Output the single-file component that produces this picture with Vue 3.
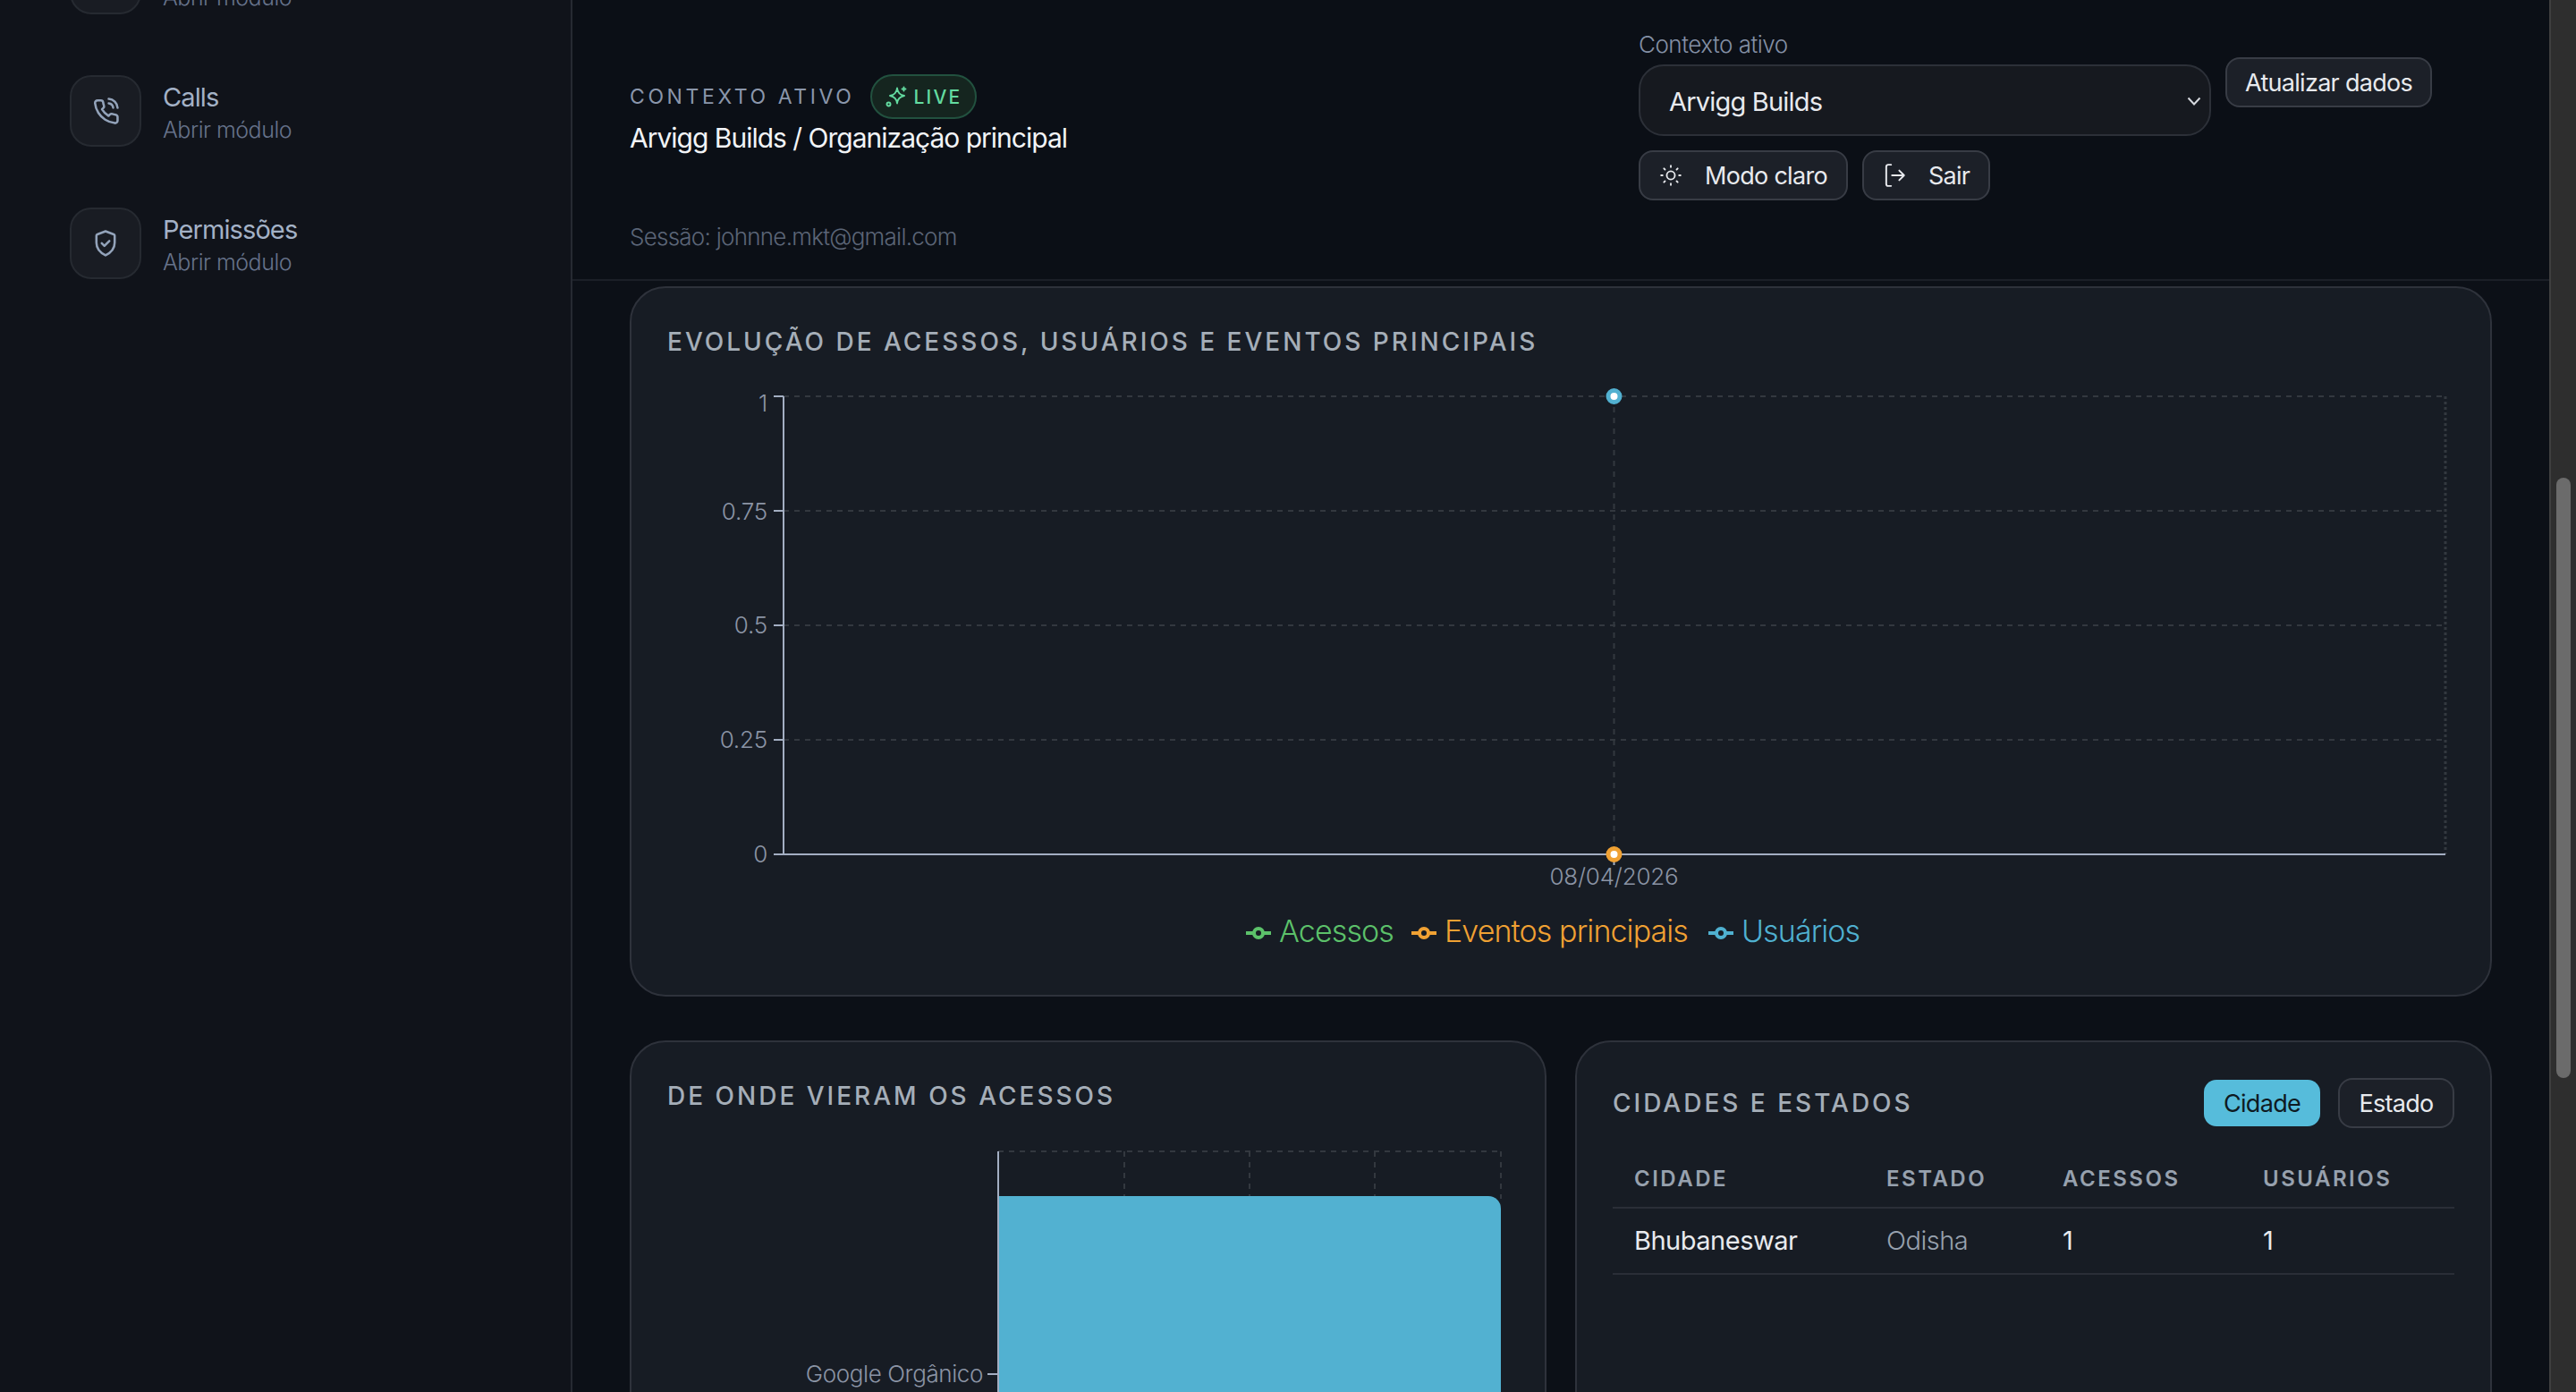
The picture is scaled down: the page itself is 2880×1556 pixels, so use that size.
<template>
  <div class="app">
    <aside class="sidebar">
      <div v-for="item in navItems" :key="item.icon || 'top'" class="nav-item">
        <div class="nav-icon">
          <svg v-if="item.icon === 'phone'" width="34" height="34" viewBox="0 0 24 24" fill="none" stroke="currentColor" stroke-width="1.8" stroke-linecap="round" stroke-linejoin="round">
            <path d="M14.5 2.5a7.5 7.5 0 0 1 7 7" />
            <path d="M14.5 6a4 4 0 0 1 3.5 3.5" />
            <path d="M21.5 17v2.6a2 2 0 0 1-2.2 2 17.6 17.6 0 0 1-7.6-2.7 17.3 17.3 0 0 1-5.3-5.3 17.6 17.6 0 0 1-2.7-7.7A2 2 0 0 1 5.7 3.7h2.6a1.8 1.8 0 0 1 1.8 1.5c.1.9.3 1.7.6 2.5a1.8 1.8 0 0 1-.4 1.9L9.200 10.700a14 14 0 0 0 5.200 5.200l1.100-1.100a1.800 1.800 0 0 1 1.900-.4c.8.3 1.600.5 2.500.6a1.800 1.800 0 0 1 1.600 2z" />
          </svg>
          <svg v-else-if="item.icon === 'shield'" width="34" height="34" viewBox="0 0 24 24" fill="none" stroke="currentColor" stroke-width="1.8" stroke-linecap="round" stroke-linejoin="round">
            <path d="M12 2.500l6.500 2.400a1 1 0 0 1 .7 1v5.600c0 4.700-3.200 8-7.200 10-4-2-7.200-5.300-7.200-10V5.900a1 1 0 0 1 .7-1z" />
            <path d="M9 11.900l2.100 2.100 3.900-3.900" />
          </svg>
        </div>
        <div class="nav-text">
          <div class="nav-label">{{ item.label || '\u00a0' }}</div>
          <div class="nav-sub">Abrir módulo</div>
        </div>
      </div>
    </aside>

    <main class="main">
      <header class="topbar">
        <div class="context-info">
          <div class="eyebrow-row">
            <span class="eyebrow">CONTEXTO ATIVO</span>
            <span class="live-pill">
              <svg width="24" height="24" viewBox="0 0 24 24" fill="none" stroke="currentColor" stroke-width="1.9" stroke-linecap="round" stroke-linejoin="round">
                <path d="M13 2.500c.5 5 3 7.500 8 8.500-5 1-7.500 3.500-8 8.500-.5-5-3-7.500-8-8.500 5-1 7.500-3.500 8-8.500z" />
                <path d="M20.500 1.500v4M18.500 3.500h4" />
                <circle cx="3.500" cy="20.500" r="2" />
              </svg>
              LIVE
            </span>
          </div>
          <div class="context-title">Arvigg Builds / Organização principal</div>
          <div class="session">Sessão: johnne.mkt@gmail.com</div>
        </div>

        <div class="context-controls">
          <div class="controls-row">
            <div class="field">
              <label class="field-label">Contexto ativo</label>
              <div class="select-box">
                <span>Arvigg Builds</span>
                <svg class="chevron" width="16" height="10" viewBox="0 0 16 10" fill="none" stroke="currentColor" stroke-width="2">
                  <path d="M1.500 1.500L8 8.500l6.500-7" />
                </svg>
              </div>
            </div>
            <button class="btn refresh">Atualizar dados</button>
          </div>
          <div class="controls-row second">
            <button class="btn with-icon">
              <svg width="26" height="26" viewBox="0 0 24 24" fill="none" stroke="currentColor" stroke-width="1.7" stroke-linecap="round">
                <circle cx="12" cy="12" r="4.200" />
                <path d="M12 2v1.500M12 20.500V22M2 12h1.500M20.500 12H22M4.900 4.900L6 6M18 18l1.100 1.100M4.900 19.100L6 18M18 6l1.100-1.100" />
              </svg>
              Modo claro
            </button>
            <button class="btn with-icon">
              <svg width="26" height="28" viewBox="0 0 24 26" fill="none" stroke="currentColor" stroke-width="1.800" stroke-linecap="round" stroke-linejoin="round">
                <path d="M8.500 2H5.500a2 2 0 0 0-2 2v18a2 2 0 0 0 2 2h3" />
                <path d="M9.500 13H22M17 8l5 5-5 5" />
              </svg>
              Sair
            </button>
          </div>
        </div>
      </header>

      <div class="content">
        <section class="card evolution">
          <h2 class="card-title">EVOLUÇÃO DE ACESSOS, USUÁRIOS E EVENTOS PRINCIPAIS</h2>
          <svg class="line-chart" width="1998" height="660" viewBox="746 430 1998 660">
            <g stroke="#33383f" stroke-width="2" stroke-dasharray="6 6">
              <line v-for="y in gridY" :key="y" x1="876" :y1="y" x2="2734" :y2="y" />
              <line x1="1804.500" y1="443" x2="1804.500" y2="955" />
              <line x1="2734" y1="443" x2="2734" y2="955" stroke-width="3" stroke-dasharray="3 3" />
            </g>
            <g stroke="#a3aec2">
              <line x1="876" y1="443" x2="876" y2="955" stroke-width="2" />
              <line x1="865" y1="955" x2="2734" y2="955" stroke-width="2" />
              <line x1="865" y1="443" x2="876" y2="443" stroke-width="2" />
              <line v-for="y in gridY.slice(1)" :key="y" x1="865" :y1="y" x2="876" :y2="y" stroke-width="2" />
              <line x1="1804.500" y1="955" x2="1804.500" y2="967" stroke-width="2" />
            </g>
            <g class="axis-text" text-anchor="end">
              <text x="858" y="460">1</text>
              <text x="858" y="581">0.75</text>
              <text x="858" y="708">0.5</text>
              <text x="858" y="836">0.25</text>
              <text x="858" y="964">0</text>
            </g>
            <text class="axis-text" x="1804.500" y="989" text-anchor="middle">08/04/2026</text>
            <circle cx="1804.500" cy="443" r="6.500" fill="#fff" stroke="#52b1d1" stroke-width="5" />
            <circle cx="1804.500" cy="955" r="6.500" fill="#fff" stroke="#f0a133" stroke-width="5" />
            <g v-for="entry in legend" :key="entry.label" :style="{ color: entry.color }">
              <line :x1="entry.x" y1="1043" :x2="entry.x + 28" y2="1043" stroke="currentColor" stroke-width="4" />
              <circle :cx="entry.x + 14" cy="1043" r="5" fill="#171c24" stroke="currentColor" stroke-width="4" />
              <text class="legend-text" :x="entry.x + 37" y="1053" fill="currentColor">{{ entry.label }}</text>
            </g>
          </svg>
        </section>

        <div class="bottom-grid">
          <section class="card">
            <h2 class="card-title">DE ONDE VIERAM OS ACESSOS</h2>
            <svg class="bar-chart" width="941" height="400" viewBox="746 1270 941 400">
              <g stroke="#33383f" stroke-width="2" stroke-dasharray="6 6">
                <line x1="1116" y1="1287" x2="1678" y2="1287" />
                <line v-for="x in gridX" :key="x" :x1="x" y1="1287" :x2="x" y2="1340" />
              </g>
              <path d="M1116 1337H1664a14 14 0 0 1 14 14V1670H1116z" fill="#52b1d1" />
              <line x1="1116" y1="1287" x2="1116" y2="1670" stroke="#a3aec2" stroke-width="2" />
              <line x1="1104" y1="1536" x2="1116" y2="1536" stroke="#a3aec2" stroke-width="2" />
              <text class="axis-text google" x="1099" y="1545" text-anchor="end">Google Orgânico</text>
            </svg>
          </section>

          <section class="card">
            <div class="card-head">
              <h2 class="card-title">CIDADES E ESTADOS</h2>
              <div class="toggle">
                <button class="btn toggle-btn active">Cidade</button>
                <button class="btn toggle-btn">Estado</button>
              </div>
            </div>
            <table class="geo-table">
              <thead>
                <tr>
                  <th class="col-city">CIDADE</th>
                  <th class="col-state">ESTADO</th>
                  <th class="col-hits">ACESSOS</th>
                  <th>USUÁRIOS</th>
                </tr>
              </thead>
              <tbody>
                <tr v-for="row in rows" :key="row.city">
                  <td>{{ row.city }}</td>
                  <td class="muted">{{ row.state }}</td>
                  <td>{{ row.hits }}</td>
                  <td>{{ row.users }}</td>
                </tr>
              </tbody>
            </table>
          </section>
        </div>
      </div>
    </main>

    <div class="scrollbar">
      <div class="scrollbar-thumb"></div>
    </div>
  </div>
</template>

<script setup>
const navItems = [
  { label: '', icon: '' },
  { label: 'Calls', icon: 'phone' },
  { label: 'Permissões', icon: 'shield' }
]

const gridY = [443, 571, 699, 827]
const gridX = [1257, 1397, 1537, 1678]

const legend = [
  { label: 'Acessos', color: '#5cc16a', x: 1393 },
  { label: 'Eventos principais', color: '#f0a133', x: 1578 },
  { label: 'Usuários', color: '#4fb0d0', x: 1910 }
]

const rows = [
  { city: 'Bhubaneswar', state: 'Odisha', hits: 1, users: 1 }
]
</script>

<style>
html,
body {
  margin: 0;
  background: #0c1017;
}
</style>

<style scoped>
.app {
  display: flex;
  height: 100vh;
  overflow: hidden;
  background: #0c1017;
  color: #e8eaee;
  font-family: Inter, "Liberation Sans", sans-serif;
  letter-spacing: -0.5px;
}

.sidebar {
  box-sizing: border-box;
  flex: 0 0 640px;
  height: 100%;
  overflow: hidden;
  padding-left: 78px;
  background: #10131a;
  border-right: 2px solid #262a32;
}

.nav-item {
  display: flex;
  align-items: center;
  gap: 24px;
  height: 80px;
  margin-bottom: 68px;
}

.nav-item:first-child {
  margin-top: -64px;
}

.nav-icon {
  box-sizing: border-box;
  display: flex;
  align-items: center;
  justify-content: center;
  width: 80px;
  height: 80px;
  border: 2px solid #262a31;
  border-radius: 24px;
  background: #191c23;
  color: #93a3ba;
}

.nav-text {
  padding-top: 5px;
}

.nav-label {
  font-size: 29px;
  line-height: 37px;
  letter-spacing: -0.9px;
  color: #a3b1c6;
}

.nav-sub {
  font-size: 25px;
  line-height: 36px;
  font-weight: 300;
  color: #66728a;
}

.main {
  flex: 1;
  min-width: 0;
}

.topbar {
  box-sizing: border-box;
  display: flex;
  height: 314px;
  padding: 0 64px;
  background: #0b0f16;
  border-bottom: 2px solid #1b1f27;
}

.context-info {
  flex: 1;
  padding-top: 83px;
}

.eyebrow-row {
  display: flex;
  align-items: center;
  gap: 18px;
}

.eyebrow {
  font-size: 23px;
  letter-spacing: 3.600px;
  color: #8a96ab;
}

.live-pill {
  box-sizing: border-box;
  display: inline-flex;
  align-items: center;
  gap: 7px;
  height: 50px;
  padding: 0 15px;
  border: 2px solid #22513f;
  border-radius: 25px;
  background: #15251f;
  color: #63dba0;
  font-size: 21px;
  font-weight: 500;
  letter-spacing: 2.200px;
}

.context-title {
  margin-top: 2px;
  font-size: 30px;
  line-height: 38px;
  letter-spacing: -1px;
  color: #f2f4f7;
}

.session {
  margin-top: 74px;
  font-size: 26px;
  line-height: 36px;
  font-weight: 300;
  letter-spacing: -0.75px;
  color: #5b6577;
}

.context-controls {
  width: 954px;
  padding-top: 35px;
}

.controls-row {
  display: flex;
  align-items: center;
  gap: 16px;
}

.controls-row.second {
  margin-top: 16px;
}

.field-label {
  display: block;
  margin-bottom: 7px;
  font-size: 26px;
  line-height: 30px;
  font-weight: 300;
  color: #8490a5;
}

.select-box {
  box-sizing: border-box;
  display: flex;
  align-items: center;
  justify-content: space-between;
  width: 640px;
  height: 80px;
  padding: 2px 9px 0 32px;
  border: 2px solid #2c3038;
  border-radius: 28px;
  background: #16191f;
  font-size: 29px;
  letter-spacing: -0.8px;
}

.chevron {
  color: #d5d8de;
}

.btn {
  box-sizing: border-box;
  height: 56px;
  padding: 0 21px;
  border: 2px solid #383c45;
  border-radius: 16px;
  background: #1c2028;
  color: #e8eaee;
  font-family: inherit;
  font-size: 27px;
  letter-spacing: -0.7px;
}

.refresh {
  margin-bottom: 3px;
  padding: 0 20px;
}

.with-icon {
  display: inline-flex;
  align-items: center;
  gap: 25px;
}

.content {
  padding: 6px 64px 0;
}

.card {
  box-sizing: border-box;
  padding: 40px 40px 22px;
  border: 2px solid #2e323b;
  border-radius: 40px;
  background: #171c24;
}

.card-title {
  margin: 0;
  font-size: 28px;
  line-height: 40px;
  font-weight: 500;
  letter-spacing: 3px;
  color: #a5aeb8;
}

.line-chart,
.bar-chart {
  display: block;
}

.line-chart {
  margin-top: 28px;
}

.bar-chart {
  margin-top: 25px;
}

.axis-text {
  font-size: 26px;
  font-weight: 300;
  letter-spacing: -0.2px;
  fill: #8b94a5;
}

.axis-text.google {
  letter-spacing: -0.4px;
}

.legend-text {
  font-size: 34px;
  font-weight: 300;
  letter-spacing: -0.9px;
}

.bottom-grid {
  display: grid;
  grid-template-columns: 1fr 1fr;
  gap: 32px;
  margin-top: 49px;
}

.card-head {
  display: flex;
  align-items: center;
  justify-content: space-between;
}

.toggle {
  display: flex;
  align-items: center;
  gap: 20px;
}

.toggle-btn {
  width: 130px;
  padding: 0;
}

.toggle-btn.active {
  height: 52px;
  border: 0;
  border-radius: 14px;
  background: #56bcdb;
  color: #0e1a22;
}

.geo-table {
  width: 100%;
  margin-top: 24px;
  border-collapse: separate;
  border-spacing: 0;
  table-layout: fixed;
}

.geo-table th {
  box-sizing: border-box;
  padding: 16px 24px 14px;
  border-bottom: 2px solid #2a2e37;
  text-align: left;
  font-size: 24px;
  line-height: 34px;
  font-weight: 600;
  letter-spacing: 2.500px;
  color: #97a1ae;
}

.geo-table td {
  padding: 20px 24px;
  border-bottom: 2px solid #2a2e37;
  font-size: 29px;
  line-height: 32px;
  font-weight: 400;
  color: #e8eaee;
}

.geo-table td.muted {
  color: #97a1ae;
  font-weight: 300;
}

.col-city {
  width: 282px;
}

.col-state {
  width: 197px;
}

.col-hits {
  width: 224px;
}

.scrollbar {
  box-sizing: border-box;
  flex: 0 0 30px;
  height: 100%;
  padding: 534px 6px 0;
  background: #2e2e2e;
  border-left: 2px solid #3f3f3f;
}

.scrollbar-thumb {
  width: 16px;
  height: 671px;
  border-radius: 8px;
  background: #6b6b6b;
}
</style>
